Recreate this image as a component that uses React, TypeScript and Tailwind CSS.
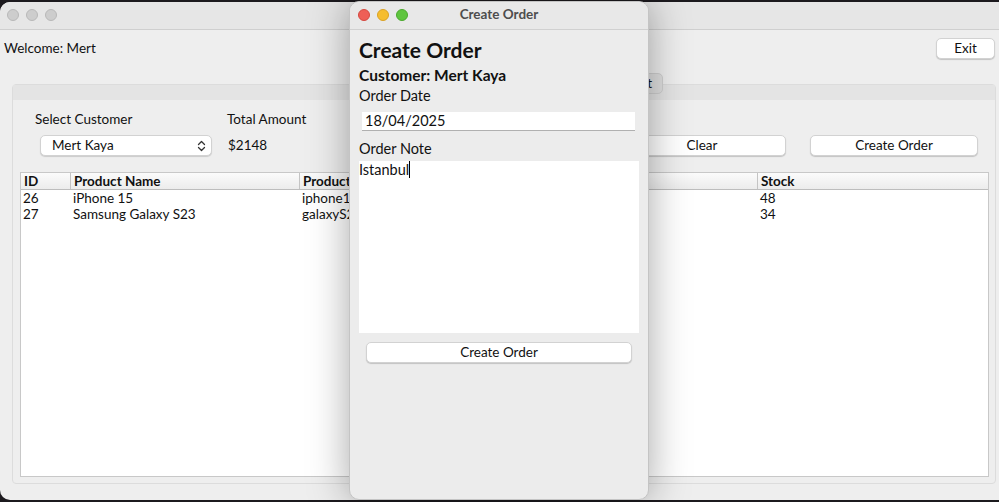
import React from 'react';

const font = { fontFamily: 'Lato, "Noto Sans", sans-serif' };

const TrafficLights = ({ colored }: { colored?: boolean }) => (
  <div className="flex items-center gap-[7px]">
    <span className={`w-[12px] h-[12px] rounded-full border ${colored ? 'bg-[#ee5f57] border-[#d4483f]' : 'bg-[#cdcdcd] border-[#b8b8b8]'}`}></span>
    <span className={`w-[12px] h-[12px] rounded-full border ${colored ? 'bg-[#f5bd2f] border-[#d9a124]' : 'bg-[#cdcdcd] border-[#b8b8b8]'}`}></span>
    <span className={`w-[12px] h-[12px] rounded-full border ${colored ? 'bg-[#5fc53f] border-[#4aa82d]' : 'bg-[#cdcdcd] border-[#b8b8b8]'}`}></span>
  </div>
);

const MacButton = ({ label, className }: { label: string; className?: string }) => (
  <div
    className={`h-[21px] flex items-center justify-center bg-white rounded-[5px] border border-[#d2d2d2] shadow-[0_1px_1px_rgba(0,0,0,0.18)] text-[13.5px] text-[#111] ${className ?? ''}`}
  >
    {label}
  </div>
);

const products = [
  { id: 26, name: 'iPhone 15', code: 'iphone15', price: 999, stock: 48 },
  { id: 27, name: 'Samsung Galaxy S23', code: 'galaxyS23', price: 1149, stock: 34 },
];

export default function App() {
  return (
    <div className="relative w-[999px] h-[502px] overflow-hidden bg-[#1c1a1e]" style={font}>
      {/* main window */}
      <div className="absolute left-0 top-[2px] w-[1010px] h-[498px] rounded-[10px] overflow-hidden bg-[#eeeeee] flex flex-col">
        <div className="h-[28px] shrink-0 bg-[#e6e6e6] border-b border-[#cfcfcf] flex items-center pl-[7px] pb-[1px]">
          <TrafficLights />
        </div>

        <div className="flex items-center justify-between pl-[4px] pr-[15px] pt-[8px]">
          <span className="text-[13.5px] text-[#111]">Welcome: Mert</span>
          <MacButton label="Exit" className="w-[59px] h-[20px]" />
        </div>

        {/* tabbed pane */}
        <div className="relative mt-[25px] ml-[12px] w-[984px] h-[400px] border border-[#dcdcdc] rounded-[4px] bg-[#eeeeee] flex flex-col">
          <div className="absolute -top-[12px] left-[507px] flex h-[21px] rounded-[5px] bg-[#e0e0e0] border border-[#d0d0d0] text-[13.5px] text-[#111] overflow-hidden">
            <span className="w-[141px] flex items-center justify-end pr-[10px]">Shopping Cart</span>
          </div>
          <div className="h-[15px] shrink-0 bg-[#e4e4e4]"></div>

          <div className="flex items-start pl-[22px] pr-[17px] pt-[11px]">
            <div className="w-[192px] flex flex-col">
              <span className="text-[13.5px] text-[#111] h-[16px] leading-[16px]">Select Customer</span>
              <div className="mt-[8px] ml-[5px] w-[172px] h-[21px] bg-white rounded-[5px] border border-[#d2d2d2] shadow-[0_1px_1px_rgba(0,0,0,0.15)] flex items-center justify-between pl-[11px] pr-[5px] text-[13.5px] text-[#111]">
                <span>Mert Kaya</span>
                <svg width="9" height="12" viewBox="0 0 9 12" fill="none" stroke="#333" strokeWidth="1.3" strokeLinecap="round" strokeLinejoin="round">
                  <path d="M1.5 4.5 L4.5 1.5 L7.5 4.5" />
                  <path d="M1.5 7.5 L4.5 10.5 L7.5 7.5" />
                </svg>
              </div>
            </div>
            <div className="flex flex-col">
              <span className="text-[13.5px] text-[#111] h-[16px] leading-[16px]">Total Amount</span>
              <span className="mt-[8px] h-[21px] leading-[21px] text-[13.5px] text-[#111] pl-[1px]">$2148</span>
            </div>
            <div className="ml-auto flex gap-[24px] pt-[24px]">
              <MacButton label="Add to Cart" className="w-[168px] h-[20px]" />
              <MacButton label="Clear" className="w-[168px] h-[20px]" />
              <MacButton label="Create Order" className="w-[168px] h-[20px]" />
            </div>
          </div>

          {/* table */}
          <div className="mt-[16px] ml-[7px] mr-[6px] h-[305px] bg-white border border-[#c8c8c8] text-[13.5px] text-[#111]">
            <div className="flex h-[17px] bg-gradient-to-b from-[#fbfbfb] to-[#ececec] border-b border-[#bdbdbd] font-bold leading-[16px]">
              <div className="w-[50px] pl-[3px] border-r border-[#c4c4c4]">ID</div>
              <div className="w-[229px] pl-[3px] border-r border-[#c4c4c4]">Product Name</div>
              <div className="w-[229px] pl-[3px] border-r border-[#c4c4c4]">Product</div>
              <div className="w-[229px] pl-[3px] border-r border-[#c4c4c4]">Price</div>
              <div className="flex-1 pl-[3px]">Stock</div>
            </div>
            {products.map((p) => (
              <div key={p.id} className="flex h-[16px] leading-[16px]">
                <div className="w-[50px] pl-[2px]">{p.id}</div>
                <div className="w-[229px] pl-[2px]">{p.name}</div>
                <div className="w-[229px] pl-[2px]">{p.code}</div>
                <div className="w-[229px] pl-[2px]">{p.price}</div>
                <div className="flex-1 pl-[2px]">{p.stock}</div>
              </div>
            ))}
          </div>
        </div>
      </div>

      {/* dialog */}
      <div className="absolute left-[349px] top-[1px] w-[300px] h-[499px] rounded-[10px] overflow-hidden bg-[#ececec] border border-[#c4c4c4] shadow-[0_0_40px_rgba(0,0,0,0.35)] flex flex-col">
        <div className="relative h-[28px] shrink-0 bg-[#e8e8e8] border-b border-[#d0d0d0] flex items-center pl-[8px] pb-[2px]">
          <TrafficLights colored />
          <span className="absolute left-0 right-0 top-[4px] text-center text-[13.5px] leading-[16px] font-bold text-[#4d4d4d] pointer-events-none">Create Order</span>
        </div>
        <div className="flex flex-col pl-[9px] pr-[9px]">
          <span className="mt-[8px] text-[21px] font-bold text-[#111] leading-[24px]">Create Order</span>
          <span className="mt-[4px] text-[15.5px] font-bold text-[#111] leading-[18px]">Customer: Mert Kaya</span>
          <span className="mt-[3px] text-[14.5px] text-[#111] leading-[17px]">Order Date</span>
          <div className="mt-[8px] ml-[3px] mr-[4px] h-[19px] bg-white border-b border-[#b0b0b0] flex items-center pl-[3px] text-[14.5px] text-[#111]">
            18/04/2025
          </div>
          <span className="mt-[9px] text-[14.5px] text-[#111] leading-[17px]">Order Note</span>
          <div className="mt-[4px] h-[172px] bg-white text-[14.5px] text-[#111] leading-[17px] flex items-start">
            <span>Istanbul</span>
            <span className="w-[1px] h-[17px] bg-black"></span>
          </div>
          <MacButton label="Create Order" className="mt-[9px] mx-[7px] h-[21px]" />
        </div>
      </div>
    </div>
  );
}
